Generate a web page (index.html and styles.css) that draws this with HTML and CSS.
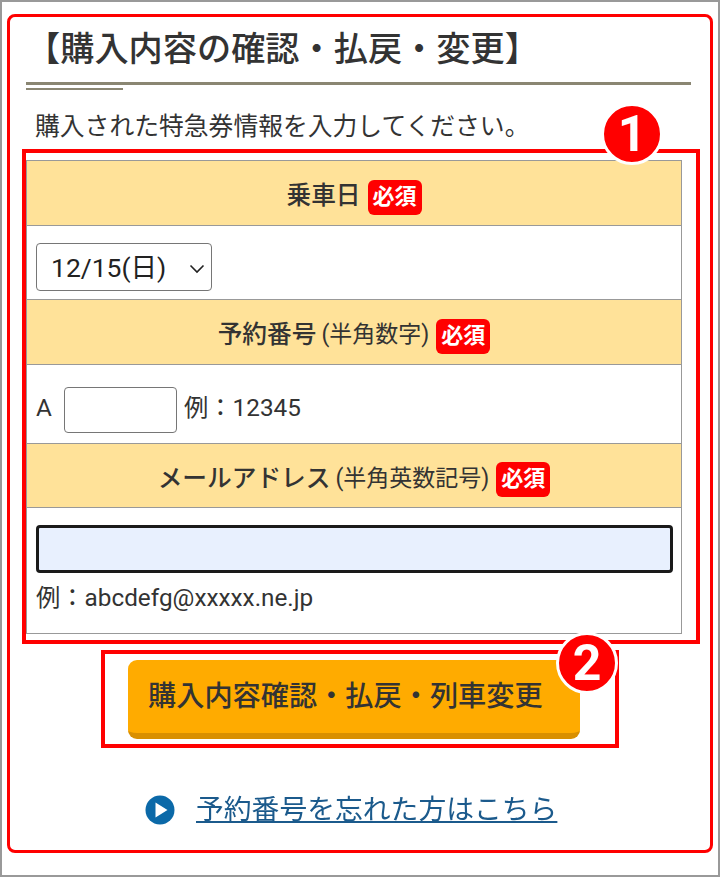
FILE: index.html
```html
<!DOCTYPE html>
<html lang="ja">
<head>
  <meta charset="UTF-8" />
  <meta name="viewport" content="width=device-width, initial-scale=1.0" />
  <title>購入内容の確認・払戻・変更</title>
  <link rel="stylesheet" href="styles.css">
</head>
<body>
  <div class="panel">
    <h1 class="title">【購入内容の確認・払戻・変更】</h1>
    <p class="intro">購入された特急券情報を入力してください。</p>

    <div class="form-area">
      <div class="row-head">乗車日 <span class="required">必須</span></div>
      <div class="row-body row-date">
        <select class="date-select">
          <option>12/15(日)</option>
        </select>
      </div>

      <div class="row-head">予約番号 <small>(半角数字)</small> <span class="required">必須</span></div>
      <div class="row-body row-number">
        <span class="prefix">A</span>
        <input type="text" class="number-input" />
        <span class="example">例：12345</span>
      </div>

      <div class="row-head row-head-last">メールアドレス <small>(半角英数記号)</small> <span class="required">必須</span></div>
      <div class="row-body row-mail">
        <input type="text" class="mail-input" />
        <div class="example">例：abcdefg@xxxxx.ne.jp</div>
      </div>

      <div class="mark mark-form"><span class="mark-num">1</span></div>
    </div>

    <div class="submit-area">
      <button class="submit">購入内容確認・払戻・列車変更</button>
      <div class="mark mark-submit"><span class="mark-num">2</span></div>
    </div>

    <div class="forgot">
      <svg class="forgot-icon" width="30" height="30" viewBox="0 0 30 30">
        <circle cx="15" cy="15" r="14.5" fill="#0b69a8" />
        <path d="M10.5 7.5 L22.5 15 L10.5 22.5 Z" fill="#fff" />
      </svg>
      <a href="#" class="forgot-link">予約番号を忘れた方はこちら</a>
    </div>
  </div>
</body>
</html>
```

FILE: styles.css
```css
* {
  box-sizing: border-box;
}

html, body {
  margin: 0;
  padding: 0;
}

body {
  width: 720px;
  height: 877px;
  border: 2px solid #999;
  padding: 12px 5px 0;
  background-color: #fff;
  color: #333;
  font-family: Roboto, "Noto Sans CJK JP", sans-serif;
}

.panel {
  height: 839px;
  border: 3px solid #f00;
  border-radius: 8px;
  padding: 0 19px 0 16px;
}

.title {
  position: relative;
  height: 68px;
  margin: 0;
  border-bottom: 3px solid #8a8672;
  font-size: 34.2px;
  font-weight: 500;
  line-height: 64px;
}

.title::after {
  content: "";
  position: absolute;
  left: 0;
  bottom: -8px;
  width: 97px;
  height: 2px;
  background-color: #8a8672;
}

.intro {
  height: 75px;
  margin: 0;
  padding: 24px 0 0 9px;
  font-size: 24.8px;
  line-height: 36px;
}

.form-area {
  position: relative;
  width: 656px;
  border: 1px solid #999;
}

.row-head {
  display: flex;
  align-items: center;
  justify-content: center;
  gap: 7px;
  height: 65px;
  border-bottom: 1px solid #999;
  background-color: #ffe299;
  font-size: 24.7px;
  font-weight: 500;
}

.row-head-last {
  height: 64px;
}

.row-head small {
  margin-left: -2px;
  font-size: 23px;
  font-weight: 400;
}

.required {
  height: 35px;
  margin-top: 8px;
  padding: 0 5px;
  border-radius: 6px;
  background-color: #f00;
  color: #fff;
  font-size: 22px;
  font-weight: 700;
  line-height: 33px;
}

.row-body {
  padding: 0 9px;
  border-bottom: 1px solid #999;
  background-color: #fff;
}

.row-date {
  height: 74px;
  padding-top: 17px;
}

.date-select {
  width: 176px;
  height: 48px;
  padding-left: 14px;
  border: 1px solid #767676;
  border-radius: 4px;
  background: #fff url("data:image/svg+xml,%3Csvg xmlns='http://www.w3.org/2000/svg' width='16' height='10' viewBox='0 0 16 10'%3E%3Cpath d='M1.5 1.5 L8 8 L14.5 1.5' fill='none' stroke='%23222' stroke-width='1.6'/%3E%3C/svg%3E") no-repeat 152px 20px;
  appearance: none;
  color: #222;
  font-family: inherit;
  font-size: 26.5px;
}

.row-number {
  display: flex;
  align-items: flex-start;
  height: 79px;
  padding-top: 22px;
  font-size: 24.3px;
  line-height: 42px;
}

.prefix {
  width: 28px;
}

.number-input {
  width: 113px;
  height: 46px;
  margin-right: 7px;
  border: 1px solid #767676;
  border-radius: 4px;
  background-color: #fff;
}

.row-mail {
  height: 125px;
  padding-top: 17px;
  border-bottom: 0;
  font-size: 24.3px;
}

.mail-input {
  display: block;
  width: 637px;
  height: 48px;
  margin-bottom: 7px;
  border: 3px solid #1a1a1a;
  border-radius: 4px;
  background-color: #e8f0fe;
}

.row-mail .example {
  line-height: 36px;
}

.submit-area {
  position: relative;
  width: 452px;
  margin: 26px 0 0 102px;
}

.submit {
  display: block;
  width: 452px;
  height: 79px;
  padding: 0 0 6px 20px;
  border: 0;
  border-bottom: 6px solid #d98f00;
  border-radius: 9px;
  background-color: #ffab00;
  color: #333;
  font-family: inherit;
  font-size: 28.2px;
  font-weight: 500;
  text-align: left;
}

.mark {
  position: absolute;
  border: 4px solid #f00;
  pointer-events: none;
}

.mark-form {
  top: -12px;
  left: -5px;
  right: -19px;
  bottom: -11px;
}

.mark-submit {
  top: -10px;
  left: -27px;
  right: -39px;
  bottom: -9px;
}

.mark-num {
  position: absolute;
  display: flex;
  align-items: center;
  justify-content: center;
  width: 62px;
  height: 62px;
  border: 3px solid #fff;
  border-radius: 50%;
  background-color: #f00;
  color: #fff;
  font-size: 50px;
  font-weight: 700;
}

.mark-form .mark-num {
  top: -50px;
  right: 33px;
}

.mark-submit .mark-num {
  top: -22px;
  right: -3px;
}

.forgot {
  display: flex;
  align-items: center;
  gap: 21px;
  margin: 51px 0 0 119px;
}

.forgot-icon {
  flex-shrink: 0;
}

.forgot-link {
  color: #1b5a8c;
  font-size: 27.8px;
  line-height: 40px;
  filter: blur(0.6px);
}
```
